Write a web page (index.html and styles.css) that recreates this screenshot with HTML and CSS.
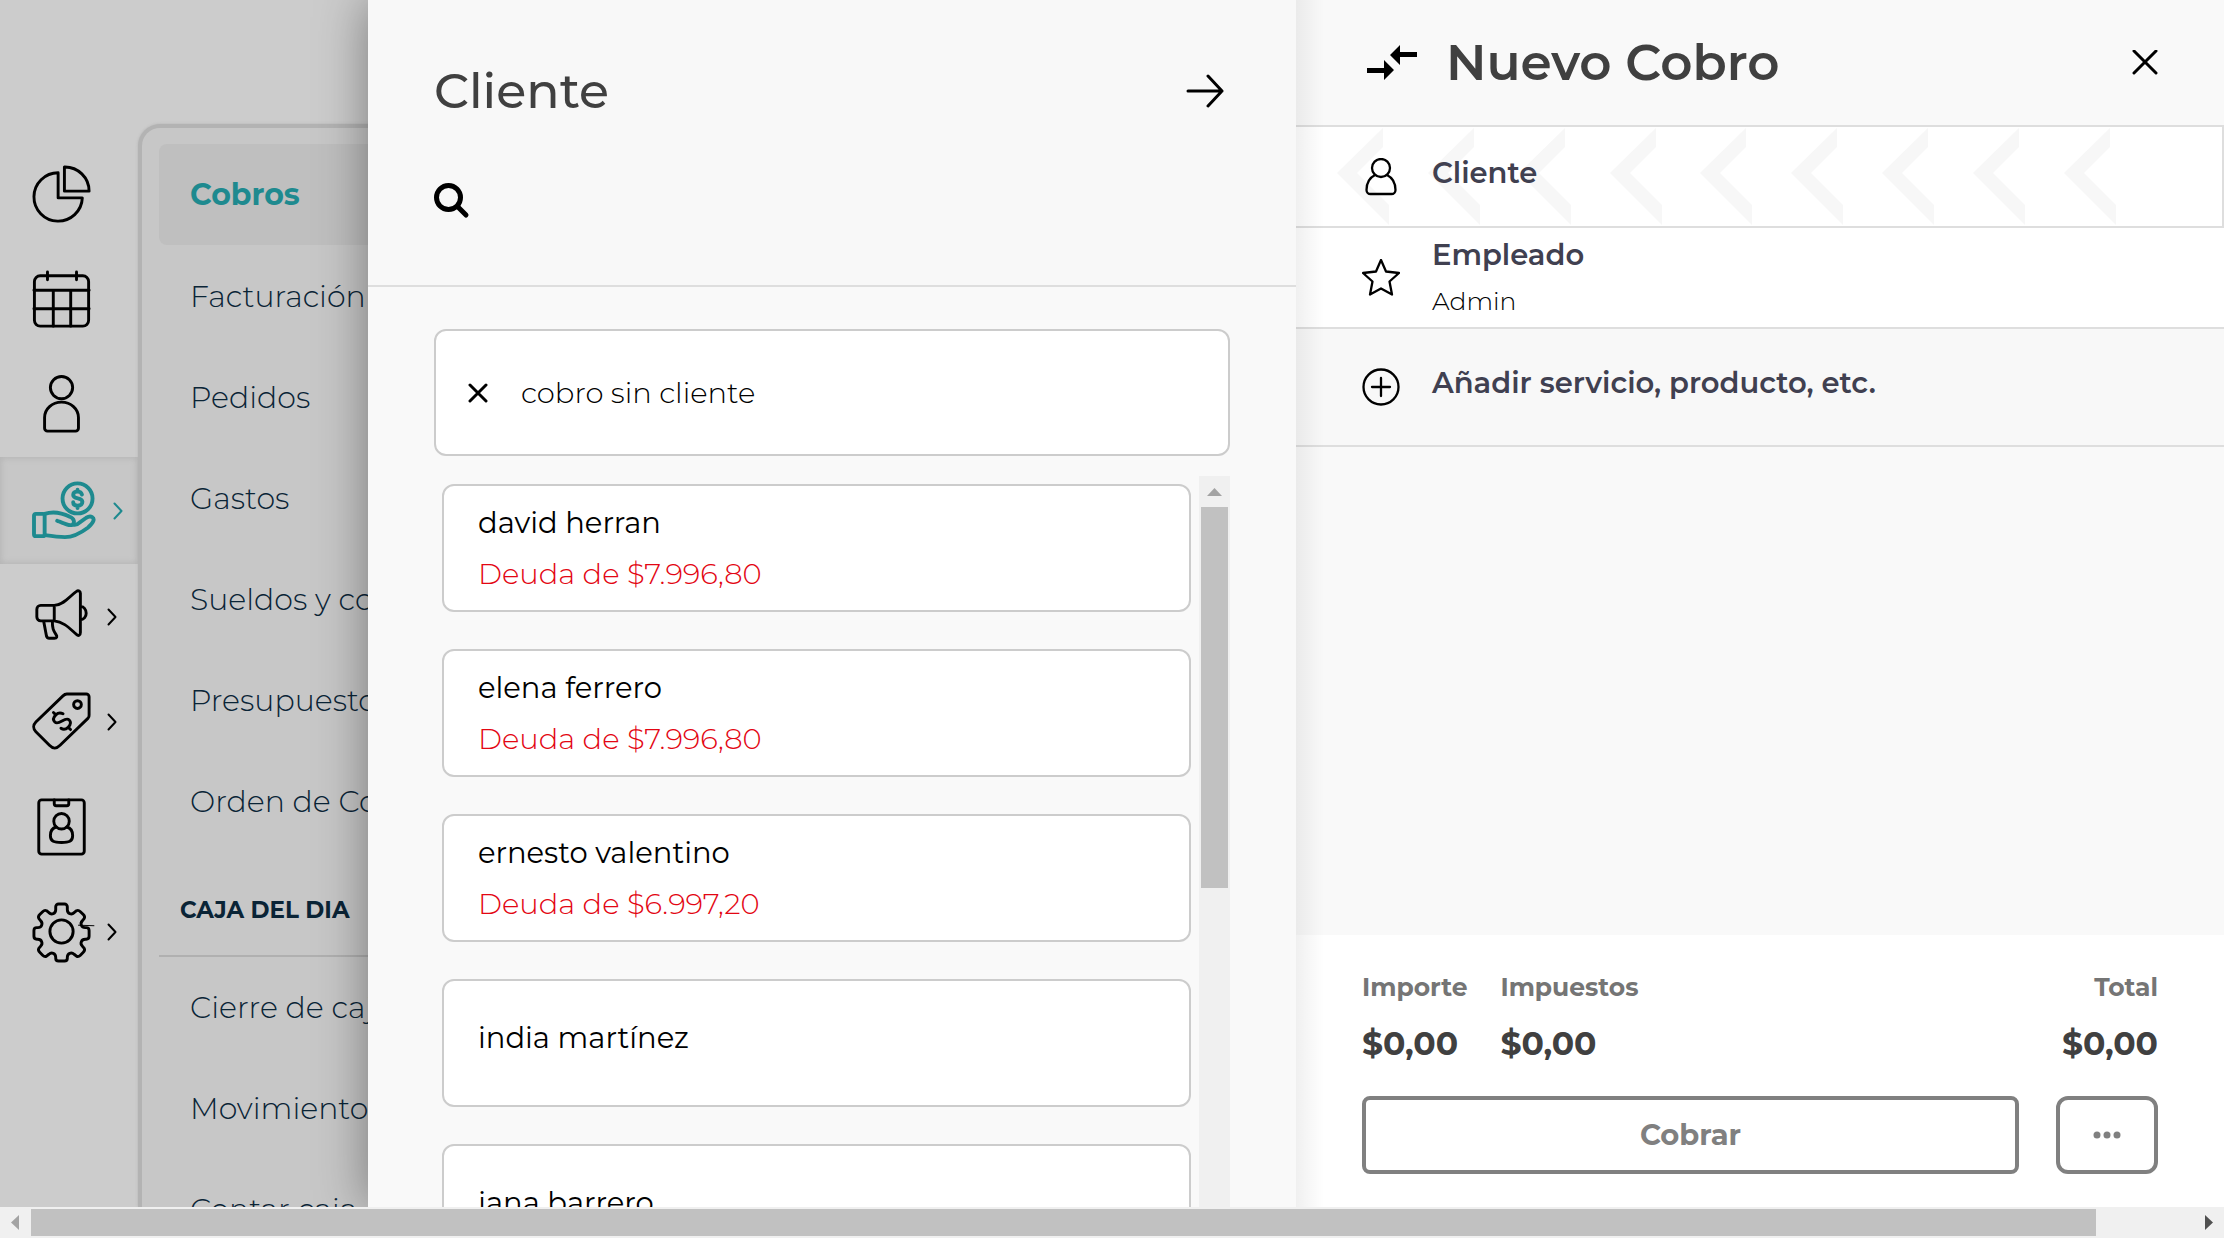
FILE: index.html
```html
<!DOCTYPE html>
<html lang="es">
<head>
<meta charset="utf-8">
<meta name="viewport" content="width=device-width, initial-scale=1">
<title>Nuevo Cobro</title>
<link rel="stylesheet" href="styles.css">
</head>
<body>
<div class="app">
  <aside class="background">
    <nav class="rail" aria-label="Principal">
      <a class="rail-item" href="#" aria-label="Resumen">
        <svg class="rail-icon" viewBox="0 0 62 62"><path d="M27 8A25 25 0 1 0 52 34H27Z"/><path d="M33.500 2V27H59A25 25 0 0 0 33.500 2Z"/></svg>
      </a>
      <a class="rail-item" href="#" aria-label="Agenda">
        <svg class="rail-icon" viewBox="0 0 62 62"><rect x="2.500" y="6" width="56" height="52" rx="6"/><path d="M2 21H59M2 40H59M22 21V58M40 21V58M16 2V10M46 2V10"/></svg>
      </a>
      <a class="rail-item" href="#" aria-label="Clientes">
        <svg class="rail-icon" viewBox="0 0 62 62"><circle cx="30.500" cy="13" r="11.500"/><path d="M13 55V44a17.500 16 0 0 1 35 0V55a3 3 0 0 1-3 3H16a3 3 0 0 1-3-3Z"/></svg>
      </a>
      <a class="rail-item active" href="#" aria-label="Cobros">
        <svg class="rail-icon wide" viewBox="0 0 66 62"><circle cx="47" cy="18" r="15.500"/><path d="M51.500 14c-.5-2-2.500-3-4.500-3-3 0-4.500 1.500-4.500 3.500 0 5 9.500 2 9.500 7 0 2.500-2 4-5 4-2.500 0-4.500-1-4.500-3.500M47 9V11M47 25.500V28"/><rect x="2" y="34" width="11" height="23" rx="2"/><path d="M13 34C22 31 31 33 39 37c5 2 5 6 3 8-3 2-9-1-16-4M42 45c3 1 5 0 7-2l7-5c5-3 9 0 7 4-1 2-3 4-5 6-8 6-16 10-24 10-7 0-14-1-21-2"/></svg>
        <svg class="rail-caret" viewBox="0 0 10 18"><path d="M1.500 1.500 8.500 9l-7 7.500"/></svg>
      </a>
      <a class="rail-item" href="#" aria-label="Marketing">
        <svg class="rail-icon" viewBox="0 0 62 62"><path d="M23 19H9a4 4 0 0 0-4 4v8a4 4 0 0 0 4 4H23ZM23 19C34 18 39 9 46 4.500c2-1.500 4 0 4 2V47c0 3-2 4-4 2C39 43 33 36 23 35M50 20a6 7 0 0 1 0 14M12 35l3 16a3 3 0 0 0 3 2h5c3 0 3-2 2-3.500C22 45 21 43 21 35"/></svg>
        <svg class="rail-caret" viewBox="0 0 10 18"><path d="M1.500 1.500 8.500 9l-7 7.500"/></svg>
      </a>
      <a class="rail-item" href="#" aria-label="Productos">
        <svg class="rail-icon" viewBox="0 0 62 62"><path d="M36 2H56a3 3 0 0 1 3 3V24a4 4 0 0 1-1 3L29 55c-4 4-7 4-11 0L4 41c-3-3-3-7 0-10L32 4c1-1 2-2 4-2Z"/><circle cx="47" cy="13" r="4"/><path transform="translate(31 30) rotate(-45)" d="M6-4.500C5-8 2-9 0-9-4-9-6-7-6-4.500-6 1.500 6-1.500 6 4.500 6 7 4 9 0 9-3 9-5.500 8-6 4.500M0-12.500V-9M0 9V12.500"/></svg>
        <svg class="rail-caret" viewBox="0 0 10 18"><path d="M1.500 1.500 8.500 9l-7 7.500"/></svg>
      </a>
      <a class="rail-item" href="#" aria-label="Empleados">
        <svg class="rail-icon" viewBox="0 0 62 62"><rect x="7" y="3" width="47" height="56" rx="3"/><path d="M23 3v4a2 2 0 0 0 2 2H36a2 2 0 0 0 2-2V3"/><circle cx="30.500" cy="25" r="8"/><path d="M25 31c-4 1-6 5-6 9 0 6 4 7 11.500 7S42 46 42 40c0-4-2-8-6-9"/></svg>
      </a>
      <a class="rail-item" href="#" aria-label="Ajustes">
        <svg class="rail-icon" viewBox="0 0 62 62"><circle cx="30.500" cy="30.500" r="12"/><path d="M24.500 8V5a3 3 0 0 1 3-3h6a3 3 0 0 1 3 3v3q0 3 2.500 4t4.500-1l2.500-2q2-1 4 1l3 3q2 2 1 4l-2 2.500q-2 2-1 4.500t4 2.500h1q3 0 3 3v6q0 3-3 3h-1q-3 0-4 2.500t1 4.500l2 2.500q1 2-1 4l-3 3q-2 2-4 1l-2.500-2q-2-2-4.500-1t-2.500 4v1q0 3-3 3h-6q-3 0-3-3v-1q0-3-2.500-4t-4.500 1l-2.500 2q-2 1-4-1l-3-3q-2-2-1-4l2-2.500q2-2 1-4.500t-4-2.500h-1q-3 0-3-3v-6q0-3 3-3h1q3 0 4-2.500t-1-4.500l-2-2.500q-1-2 1-4l3-3q2-2 4-1l2.500 2q2 2 4.500 1t2.500-4Z"/><path class="spur" d="M48 24l16 .5"/></svg>
        <svg class="rail-caret" viewBox="0 0 10 18"><path d="M1.500 1.500 8.500 9l-7 7.500"/></svg>
      </a>
    </nav>
    <nav class="submenu" aria-label="Ventas">
      <a class="submenu-item selected" href="#">Cobros</a>
      <a class="submenu-item" href="#">Facturación</a>
      <a class="submenu-item" href="#">Pedidos</a>
      <a class="submenu-item" href="#">Gastos</a>
      <a class="submenu-item" href="#">Sueldos y comisiones</a>
      <a class="submenu-item" href="#">Presupuestos</a>
      <a class="submenu-item" href="#">Orden de Compra</a>
      <h2 class="submenu-title">CAJA DEL DIA</h2>
      <a class="submenu-item" href="#">Cierre de caja</a>
      <a class="submenu-item" href="#">Movimientos</a>
      <a class="submenu-item" href="#">Contar caja</a>
    </nav>
  </aside>

  <section class="picker">
    <header class="picker-header">
      <div class="picker-top">
        <h1 class="picker-title">Cliente</h1>
        <button class="icon-button" type="button" aria-label="Volver">
          <svg width="38" height="34" viewBox="0 0 38 34"><path class="line" d="M2 17H36M22 2 36 17 22 32"/></svg>
        </button>
      </div>
      <button class="icon-button" type="button" aria-label="Buscar">
        <svg width="36" height="36" viewBox="0 0 36 36"><circle class="thick" cx="14.500" cy="14.500" r="12"/><path class="thick" d="M23.500 23.500 32 32"/></svg>
      </button>
    </header>
    <div class="picker-body">
      <button class="no-client" type="button">
        <svg width="20" height="20" viewBox="0 0 20 20"><path class="line" d="M2 2 18 18M18 2 2 18"/></svg>
        cobro sin cliente
      </button>
      <div class="client-area">
        <div class="client-list">
          <button class="client" type="button"><span>david herran</span><span class="debt">Deuda de $7.996,80</span></button>
          <button class="client" type="button"><span>elena ferrero</span><span class="debt">Deuda de $7.996,80</span></button>
          <button class="client" type="button"><span>ernesto valentino</span><span class="debt">Deuda de $6.997,20</span></button>
          <button class="client settled" type="button"><span>india martínez</span></button>
          <button class="client settled" type="button"><span>jana barrero</span></button>
        </div>
        <div class="vscroll" aria-hidden="true">
          <svg class="vscroll-arrow" viewBox="0 0 31 31"><path d="M8 20 15.500 12 23 20Z"/></svg>
          <div class="vscroll-thumb"></div>
        </div>
      </div>
    </div>
  </section>

  <section class="charge">
    <header class="charge-header">
      <svg width="52" height="36" viewBox="0 0 52 36"><path d="M1 23H18V15L28 25 18 35V28H1ZM51 12H34V20L24 10 34 0V7H51Z"/></svg>
      <h1 class="charge-title">Nuevo Cobro</h1>
      <button class="icon-button" type="button" aria-label="Cerrar">
        <svg width="26" height="26" viewBox="0 0 26 26"><path class="line" d="M2 1 24 23M24 1 2 23"/></svg>
      </button>
    </header>
    <button class="row row-client" type="button">
      <svg class="chevrons" width="784" height="99" viewBox="0 0 784 99" aria-hidden="true">
        <defs><path id="chev" d="M0 46 46 1V20L20 46 52 78V98Z"/></defs>
        <use href="#chev"/><use href="#chev" x="91"/><use href="#chev" x="182"/><use href="#chev" x="273"/><use href="#chev" x="363"/><use href="#chev" x="454"/><use href="#chev" x="545"/><use href="#chev" x="636"/><use href="#chev" x="727"/>
      </svg>
      <svg class="row-icon" viewBox="0 0 38 38"><circle class="thin" cx="19" cy="10" r="9"/><path class="thin" d="M13 17C7 20 4.500 26 4.500 32a4 4 0 0 0 4 4H29.500a4 4 0 0 0 4-4c0-6-2.500-12-8.500-15"/></svg>
      <span class="row-text"><span class="row-label">Cliente</span></span>
    </button>
    <button class="row row-employee" type="button">
      <svg class="row-icon" viewBox="0 0 38 38"><path class="thin" d="M19 1 24 12.500 37 14 27.500 22.500 30 35.500 19 29.500 8 35.500 10.500 22.500 1 14 14 12.500Z"/></svg>
      <span class="row-text"><span class="row-label">Empleado</span><span class="row-value">Admin</span></span>
    </button>
    <button class="row row-add" type="button">
      <svg class="row-icon" viewBox="0 0 38 38"><circle class="thin" cx="19" cy="19" r="17.500"/><path class="thin" d="M19 10V28M10 19H28"/></svg>
      <span class="row-text"><span class="row-label">Añadir servicio, producto, etc.</span></span>
    </button>
    <div class="lines"></div>
    <footer class="charge-footer">
      <dl class="totals">
        <div><dt>Importe</dt><dd>$0,00</dd></div>
        <div><dt>Impuestos</dt><dd>$0,00</dd></div>
        <div class="total"><dt>Total</dt><dd>$0,00</dd></div>
      </dl>
      <div class="actions">
        <button class="action pay" type="button">Cobrar</button>
        <button class="action more" type="button" aria-label="Más opciones">
          <svg width="28" height="8" viewBox="0 0 28 8"><circle cx="4" cy="4" r="3.500"/><circle cx="14" cy="4" r="3.500"/><circle cx="24" cy="4" r="3.500"/></svg>
        </button>
      </div>
    </footer>
  </section>
</div>
<div class="hscroll" aria-hidden="true">
  <svg class="hscroll-arrow" viewBox="0 0 31 31"><path d="M19 8 11 15.500 19 23Z"/></svg>
  <div class="hscroll-track"><div class="hscroll-thumb"></div></div>
  <svg class="hscroll-arrow end" viewBox="0 0 31 31"><path d="M12 8 20 15.500 12 23Z"/></svg>
</div>
</body>
</html>
```
FILE: styles.css
```css
* { box-sizing: border-box; }

body {
  margin: 0;
  height: 100vh;
  display: flex;
  flex-direction: column;
  overflow: hidden;
  font-family: Montserrat, Inter, sans-serif;
  font-size: 29px;
  line-height: 40px;
  color: #000;
}

button {
  font: inherit;
  color: inherit;
  background: none;
  border: 0;
  padding: 0;
  text-align: left;
}

a { color: inherit; text-decoration: none; }
h1, h2, dl, dd { margin: 0; }
svg { display: block; flex: none; }

.line, .thick, .thin { fill: none; stroke: #000; stroke-linecap: round; stroke-linejoin: round; }
.line { stroke-width: 3; }
.thick { stroke-width: 5; }
.thin { stroke-width: 2.3; }

.icon-button { display: block; }

.app {
  flex: 1;
  min-height: 0;
  display: grid;
  grid-template-columns: 368px minmax(0, 1fr) minmax(0, 1fr);
  grid-template-rows: minmax(0, 1fr);
  overflow: hidden;
}

/* Dimmed page behind the drawers */
.background {
  display: flex;
  overflow: hidden;
  background: #ccc;
}

.rail {
  width: 138px;
  flex: none;
  padding-top: 142px;
  display: flex;
  flex-direction: column;
}

.rail-item {
  flex: none;
  height: 105px;
  padding-left: 32px;
  display: flex;
  align-items: center;
  gap: 15px;
}

.rail-item.active {
  height: 107px;
  gap: 17px;
  background: #c7c7c7;
  box-shadow: inset 0 0 6px 1px #b4b4b4;
}

.rail-icon, .rail-caret {
  fill: none;
  stroke: #000;
  stroke-width: 3;
  stroke-linecap: round;
  stroke-linejoin: round;
}
.rail-icon { width: 60px; height: 60px; overflow: visible; }
.rail-icon.wide { width: 64px; }
.rail-caret { width: 10px; height: 18px; stroke-width: 2; }
.active .rail-icon { stroke: #1e8a8f; stroke-width: 4; }
.active .rail-caret { stroke: #1e8a8f; }
.spur { stroke-width: 1; }

.submenu {
  flex: none;
  width: 480px;
  margin-top: 124px;
  padding: 16px 17px;
  background: #c7c7c7;
  border: 4px solid #b3b3b3;
  border-bottom: 0;
  border-radius: 22px 22px 0 0;
  box-shadow: 0 0 3px #b3b3b3;
  color: #0a2436;
}

.submenu-item {
  display: flex;
  align-items: center;
  height: 101px;
  padding: 0 31px;
  border-radius: 8px;
  font-size: 30px;
  font-weight: 300;
}

.submenu-item.selected {
  margin-bottom: 1px;
  background: #bfbfbf;
  color: #1e8a8f;
  font-weight: 700;
}

.submenu-title {
  height: 105px;
  padding: 38px 21px 0;
  border-bottom: 2px solid #b0b0b0;
  font-size: 23px;
  font-weight: 700;
}

/* Client picker drawer */
.picker {
  position: relative;
  z-index: 1;
  display: flex;
  flex-direction: column;
  min-height: 0;
  background: #f9f9f9;
  box-shadow: 0 0 48px rgba(0, 0, 0, .4);
  clip-path: inset(0 0 0 -60px);
}

.picker-header {
  flex: none;
  height: 287px;
  padding: 61px 66px 0;
  background: #f8f8f8;
  border-bottom: 2px solid #dedede;
}

.picker-top {
  display: flex;
  align-items: center;
  justify-content: space-between;
  height: 60px;
  margin: 0 6px 62px 0;
}

.picker-title {
  font-size: 49px;
  line-height: 60px;
  font-weight: 500;
  color: #404040;
}

.picker-body {
  flex: 1;
  min-height: 0;
  display: flex;
  flex-direction: column;
  padding: 42px 66px 0;
}

.no-client, .client {
  flex: none;
  background: #fff;
  border: 2px solid #ccc;
  border-radius: 12px;
}

.no-client {
  height: 127px;
  display: flex;
  align-items: center;
  gap: 33px;
  padding: 0 32px;
  font-weight: 300;
}

.client-area {
  flex: 1;
  min-height: 0;
  margin-top: 20px;
  display: flex;
}

.client-list {
  flex: 1;
  min-width: 0;
  overflow: hidden;
  padding: 8px 8px 0;
  display: flex;
  flex-direction: column;
  gap: 37px;
}

.client {
  height: 128px;
  padding: 0 34px;
  display: flex;
  flex-direction: column;
  justify-content: center;
  gap: 11px;
}

.client.settled { padding-bottom: 11px; }

.debt { color: #e30613; font-weight: 300; }

.vscroll {
  flex: none;
  width: 31px;
  background: #f0f0f0;
}
.vscroll-arrow { width: 31px; height: 31px; fill: #a3a3a3; }
.vscroll-thumb { height: 381px; margin: 0 2px; background: #c1c1c1; }

/* Charge drawer */
.charge {
  position: relative;
  display: flex;
  flex-direction: column;
  min-height: 0;
  background: #f9f9f9;
}

.charge::before {
  content: "";
  position: absolute;
  z-index: 1;
  top: 0;
  bottom: 0;
  left: 0;
  width: 28px;
  background: linear-gradient(to right, rgba(0, 0, 0, .06), rgba(0, 0, 0, 0));
}

.charge-header {
  flex: none;
  height: 127px;
  padding: 0 66px 0 70px;
  display: flex;
  align-items: center;
  border-bottom: 2px solid #dedede;
}

.charge-title {
  flex: 1;
  margin-left: 28px;
  font-size: 50px;
  line-height: 60px;
  font-weight: 600;
  color: #404040;
}

.row {
  position: relative;
  flex: none;
  height: 101px;
  padding: 0 66px;
  display: flex;
  align-items: center;
  gap: 32px;
  background: #fff;
  border-bottom: 2px solid #dedede;
}

.row-client { border-right: 2px solid #dedede; }
.row-add { height: 118px; background: #f8f8f8; }

.chevrons {
  position: absolute;
  top: 0;
  left: 41px;
  fill: #f7f7f7;
}

.row-icon { position: relative; width: 38px; height: 38px; }

.row-text {
  position: relative;
  display: flex;
  flex-direction: column;
  gap: 6px;
  padding-bottom: 8px;
}

.row-employee .row-text { padding: 0; }
.row-label { font-weight: 600; color: #404050; }
.row-value { font-size: 25px; font-weight: 300; }

.lines { flex: 1; }

.charge-footer {
  flex: none;
  padding: 32px 66px 33px;
  background: #fff;
}

.totals { display: flex; gap: 33px; font-weight: 700; }
.total { margin-left: auto; text-align: right; }
.totals dt { font-size: 25px; color: #757575; }
.totals dd { margin-top: 16px; font-size: 33px; color: #404040; }

.actions { display: flex; gap: 37px; margin-top: 33px; }

.action {
  height: 78px;
  display: flex;
  align-items: center;
  justify-content: center;
  border: 4px solid #808080;
  border-radius: 8px;
  background: #fff;
  color: #808080;
  font-weight: 700;
}

.pay { flex: 1; }
.more { width: 102px; border-radius: 12px; }
.more svg { fill: #808080; }

/* Page scrollbar */
.hscroll {
  flex: none;
  height: 31px;
  display: flex;
  background: #f0f0f0;
}
.hscroll-arrow { width: 31px; height: 31px; fill: #a3a3a3; }
.hscroll-arrow.end { fill: #505050; }
.hscroll-track { flex: 1; }
.hscroll-thumb { width: 95.5%; height: 27px; margin-top: 2px; background: #c1c1c1; }
```
